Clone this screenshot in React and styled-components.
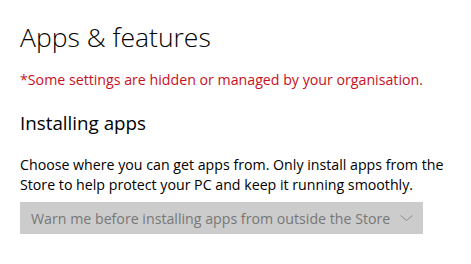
import React from "react";
import styled, { createGlobalStyle } from "styled-components";

const GlobalStyle = createGlobalStyle`
  html, body {
    margin: 0;
    padding: 0;
    background: #fff;
  }
  body {
    font-family: "Open Sans", "Noto Sans", sans-serif;
    color: #000;
  }
`;

const Page = styled.div`
  width: 471px;
  height: 264px;
  box-sizing: border-box;
  padding: 18.5px 20px 0 20px;
  overflow: hidden;
`;

const Title = styled.h1`
  margin: 0;
  font-size: 26.5px;
  font-weight: 300;
  line-height: 36px;
`;

const Notice = styled.p`
  margin: 15px 0 0 0;
  font-size: 14.2px;
  line-height: 20px;
  color: #c8101e;
`;

const Section = styled.h2`
  margin: 20px 0 0 0;
  font-size: 18.8px;
  font-weight: 400;
  line-height: 26px;
`;

const Body = styled.p`
  margin: 19.5px 0 0 0;
  font-size: 14.2px;
  line-height: 20px;
`;

const Select = styled.div`
  margin-top: 7px;
  width: 403px;
  height: 32px;
  box-sizing: border-box;
  padding: 0 10px 0 11px;
  background: #cccccc;
  color: #777777;
  display: flex;
  align-items: center;
  justify-content: space-between;
  font-size: 14.2px;
`;

const Chevron = () => (
  <svg width="13" height="6" viewBox="0 0 13 6" fill="none">
    <path d="M0.5 0.5 L6.5 5.5 L12.5 0.5" stroke="#8a8a8a" strokeWidth="1" />
  </svg>
);

export default function App() {
  return (
    <>
      <GlobalStyle />
      <Page>
        <Title>Apps &amp; features</Title>
        <Notice>*Some settings are hidden or managed by your organisation.</Notice>
        <Section>Installing apps</Section>
        <Body>
          Choose where you can get apps from. Only install apps from the
          <br />
          Store to help protect your PC and keep it running smoothly.
        </Body>
        <Select>
          <span>Warn me before installing apps from outside the Store</span>
          <Chevron />
        </Select>
      </Page>
    </>
  );
}
